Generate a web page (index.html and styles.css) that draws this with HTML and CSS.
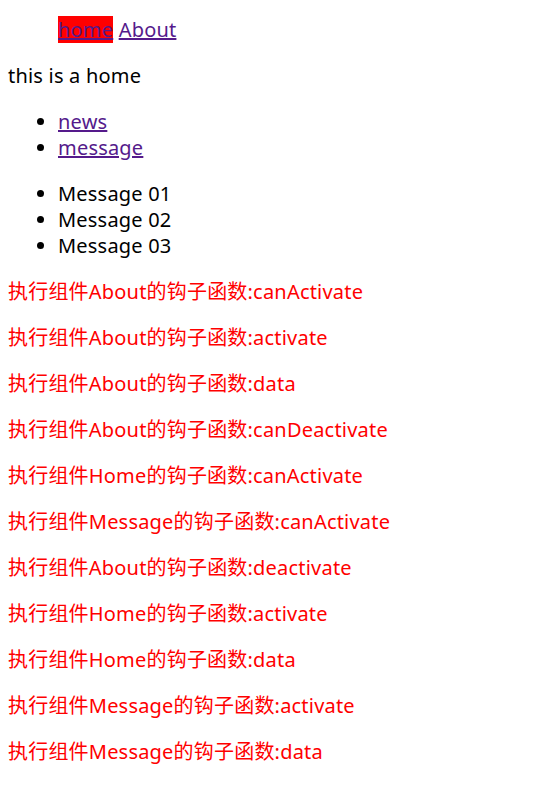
FILE: index.html
```html
<!DOCTYPE html>
<html>
<head>
<meta charset="utf-8">
<link rel="stylesheet" href="styles.css">
</head>
<body>
<ul class="nav">
  <li><a href="#" class="link active">home</a> <a href="#" class="link">About</a></li>
</ul>
<p class="title">this is a home</p>
<ul class="list">
  <li><a href="#" class="link">news</a></li>
  <li><a href="#" class="link">message</a></li>
</ul>
<ul class="list">
  <li>Message 01</li>
  <li>Message 02</li>
  <li>Message 03</li>
</ul>
<div class="log">
  <p>执行组件About的钩子函数:canActivate</p>
  <p>执行组件About的钩子函数:activate</p>
  <p>执行组件About的钩子函数:data</p>
  <p>执行组件About的钩子函数:canDeactivate</p>
  <p>执行组件Home的钩子函数:canActivate</p>
  <p>执行组件Message的钩子函数:canActivate</p>
  <p>执行组件About的钩子函数:deactivate</p>
  <p>执行组件Home的钩子函数:activate</p>
  <p>执行组件Home的钩子函数:data</p>
  <p>执行组件Message的钩子函数:activate</p>
  <p>执行组件Message的钩子函数:data</p>
</div>
</body>
</html>
```
FILE: styles.css
```css
html, body {
  margin: 0;
  padding: 0;
  background: #fff;
}
body {
  padding: 9px 8px 8px;
  font-family: "Noto Sans", "Noto Sans CJK SC", sans-serif;
  font-size: 20px;
  line-height: 26px;
  letter-spacing: 0.2px;
  color: #000;
}
ul {
  margin: 20px 0;
  padding-left: 50px;
}
.nav {
  margin-top: 8px;
  list-style: none;
}
.title {
  margin: 20px 0;
}
.link {
  color: #551a8b;
  text-decoration: underline;
}
.active {
  background: #ff0000;
}
.log p {
  margin: 20px 0;
  color: #ff0000;
}
```
